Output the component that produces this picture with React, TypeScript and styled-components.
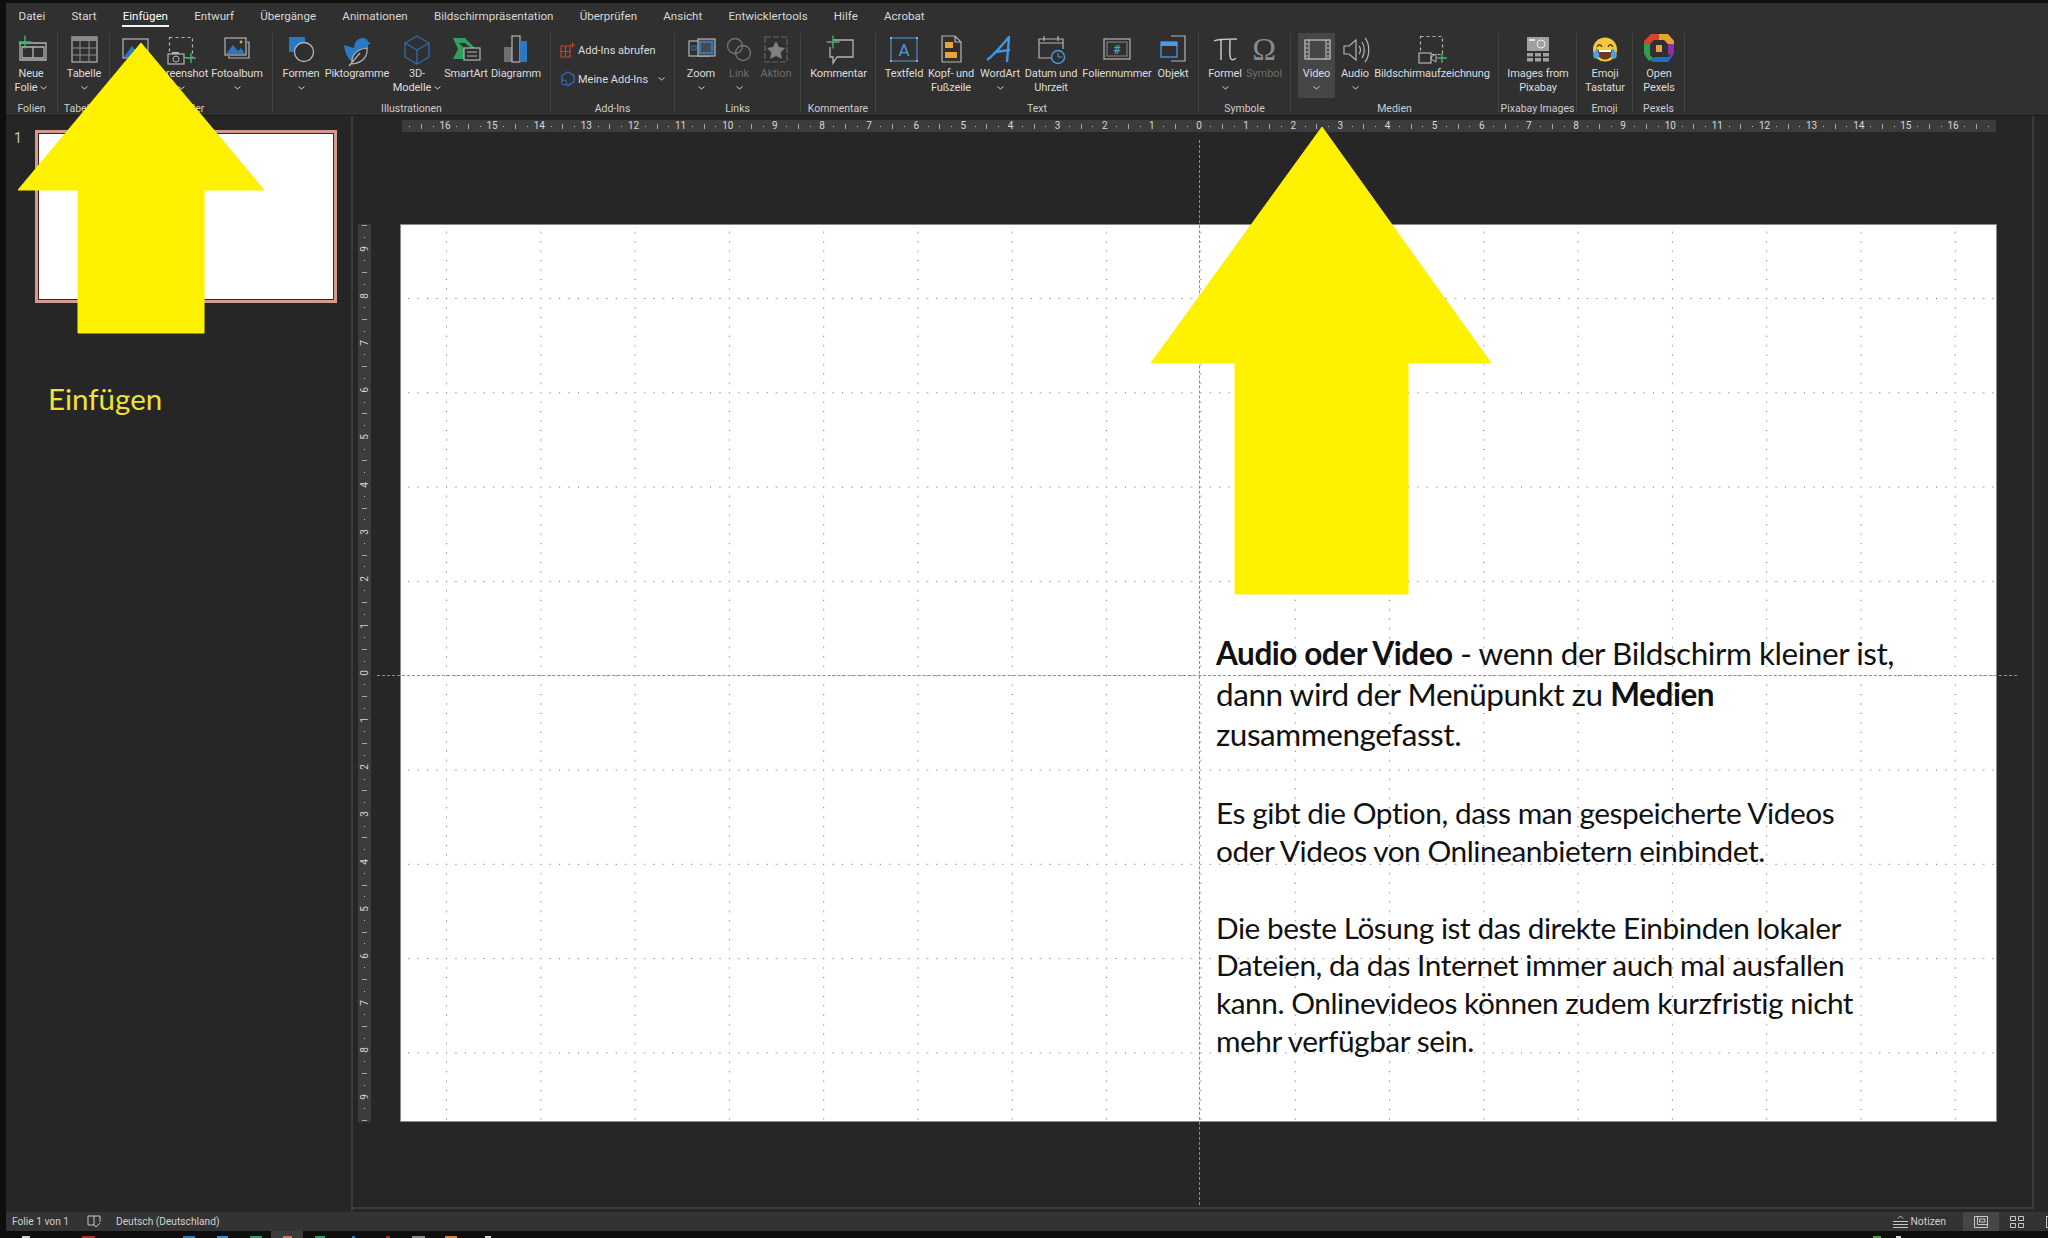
import React from 'react';
import styled, { createGlobalStyle } from 'styled-components';

const GRID = 94.3;
const UNIT = GRID / 2;
const BLUE = '#2b79c2';
const LINE = '#b4b4b4';
const GREEN = '#3fb66b';
const ORANGE = '#e8a33d';

const GlobalStyle = createGlobalStyle`
  html, body { margin: 0; padding: 0; background: #101010; }
  * { box-sizing: border-box; }
`;

/* Ribbon icons, all on a 34x34 canvas centred on the button */
const Plus = ({ x, y, s = 6 }: { x: number; y: number; s?: number }) => (
  <path d={`M${x - s} ${y}H${x + s}M${x} ${y - s}V${y + s}`} stroke={GREEN} strokeWidth="1.4" fill="none" />
);

const icons: Record<string, React.ReactNode> = {
  slide: (
    <>
      <path d="M6 10H32V27H6ZM8 14H30V25H8ZM19 14V25" fill="none" stroke={LINE} strokeWidth="1.3" />
      <Plus x={11} y={9} s={6.5} />
    </>
  ),
  table: (
    <>
      <rect x="5" y="4" width="25" height="25" fill="none" stroke={LINE} strokeWidth="1.2" />
      <rect x="5" y="4" width="25" height="4" fill="#8c8c8c" />
      <path d="M13 8V29M22 8V29M5 15H30M5 22H30" stroke="#8f8f8f" strokeWidth="1" />
    </>
  ),
  picture: (
    <>
      <rect x="5" y="6" width="25" height="19" fill="none" stroke={LINE} strokeWidth="1.2" />
      <path d="M6 24L14 13L20 20L24 16L29 24Z" fill={BLUE} />
    </>
  ),
  screenshot: (
    <>
      <rect x="5.5" y="4.5" width="23" height="20" fill="none" stroke={LINE} strokeWidth="1.2" strokeDasharray="3 3" />
      <rect x="4" y="21" width="16" height="10" fill="#2f2f2f" stroke={LINE} strokeWidth="1.2" />
      <rect x="8" y="19" width="7" height="2" fill={LINE} />
      <circle cx="12" cy="26" r="3" fill="none" stroke={LINE} />
      <Plus x={27} y={25} s={5} />
    </>
  ),
  album: (
    <>
      <path d="M27 9H29V25H9V23" fill="none" stroke={LINE} strokeWidth="1.2" />
      <rect x="5" y="5" width="21" height="17" fill="none" stroke={LINE} strokeWidth="1.2" />
      <path d="M6 21L13 12L18 18L21 15L25 21Z" fill={BLUE} />
      <circle cx="21" cy="9" r="1.4" fill={ORANGE} />
    </>
  ),
  shapes: (
    <>
      <rect x="5" y="4" width="16" height="15" fill={BLUE} />
      <circle cx="20" cy="19" r="9.5" fill="#2f2f2f" stroke={LINE} strokeWidth="1.3" />
    </>
  ),
  icons: (
    <>
      <path d="M4 12L14 15C14 9 18 5 23 5C26 5 28 7 28 9L31 10L28 12C28 18 25 22 21 25L17 31C11 30 5 23 4 12Z" fill={BLUE} />
      <path d="M12 31C11 23 16 16 27 15C28 24 22 30 12 31ZM9 33L20 20" fill="#2f2f2f" stroke={LINE} strokeWidth="1.2" />
    </>
  ),
  cube: (
    <path d="M17 3L29 10V24L17 31L5 24V10ZM5 10L17 17L29 10M17 17V31" fill="none" stroke="#2a6db0" strokeWidth="1.3" />
  ),
  smartart: (
    <>
      <path d="M4 5H16L26 15H22L16 10H10L16 16V26H4L9 16Z" fill="#2f9e5f" />
      <rect x="15" y="15" width="16" height="12" fill="#2f2f2f" stroke={LINE} strokeWidth="1.2" />
      <path d="M18 19H28M18 23H28" stroke={LINE} />
    </>
  ),
  chart: (
    <>
      <rect x="5" y="14" width="8" height="15" fill="#6f6f6f" />
      <rect x="13" y="3" width="8" height="26" fill="none" stroke={LINE} strokeWidth="1.2" />
      <rect x="21" y="8" width="7" height="21" fill={BLUE} />
    </>
  ),
  zoom: (
    <>
      <rect x="5" y="8" width="20" height="15" fill="none" stroke={LINE} strokeWidth="1.2" />
      <rect x="14" y="6" width="17" height="17" fill="#4a4a4a" stroke={LINE} strokeWidth="1.2" />
      <rect x="16" y="9" width="12" height="11" fill="none" stroke={BLUE} strokeWidth="2" />
      <rect x="8" y="13" width="4" height="4" fill="none" stroke={BLUE} />
    </>
  ),
  link: (
    <>
      <circle cx="13" cy="13" r="7.5" fill="none" stroke="#747474" strokeWidth="1.3" />
      <circle cx="21" cy="20" r="7.5" fill="none" stroke="#747474" strokeWidth="1.3" />
    </>
  ),
  action: (
    <>
      <rect x="6" y="4" width="22" height="25" fill="none" stroke="#666" strokeWidth="1.2" strokeDasharray="6 2" />
      <path d="M17 8L20 14L26 15L21.5 19.5L23 26L17 23L11 26L12.5 19.5L8 15L14 14Z" fill="#808080" />
    </>
  ),
  comment: (
    <>
      <path d="M11 7H31V24H15L11 30V24H8V14" fill="none" stroke={LINE} strokeWidth="1.3" />
      <Plus x={11} y={9} s={6.5} />
    </>
  ),
  textbox: (
    <>
      <rect x="4" y="5" width="26" height="23" fill="none" stroke="#4d8cc4" strokeWidth="1.2" />
      <path d="M3 4h2v2h-2zM29 4h2v2h-2zM3 27h2v2h-2zM29 27h2v2h-2z" fill="#7db4e4" />
      <text x="17" y="23" textAnchor="middle" fontFamily="Roboto, sans-serif" fontSize="17" fill="#4d9ae0">A</text>
    </>
  ),
  header: (
    <>
      <path d="M8 3H21L27 9V29H8ZM21 3V9H27" fill="none" stroke={LINE} strokeWidth="1.2" />
      <rect x="11" y="9" width="8" height="6" fill={ORANGE} />
      <rect x="11" y="19" width="12" height="6" fill={ORANGE} />
    </>
  ),
  wordart: (
    <path d="M4 27C11 22 19 12 26 4L24 29M12 19L27 17" fill="none" stroke="#3f97e8" strokeWidth="2.4" strokeLinejoin="round" />
  ),
  calendar: (
    <>
      <path d="M20 25H5V6H29V16M5 10H29M10 3V8M24 3V8" fill="none" stroke={LINE} strokeWidth="1.2" />
      <circle cx="24" cy="24" r="6.5" fill="#2f2f2f" stroke="#4d9ae0" strokeWidth="1.4" />
      <path d="M24 20V24H28" fill="none" stroke="#4d9ae0" />
    </>
  ),
  number: (
    <>
      <rect x="4" y="6" width="26" height="20" fill="none" stroke={LINE} strokeWidth="1.2" />
      <rect x="7" y="9" width="20" height="14" fill="none" stroke="#8a8a8a" />
      <text x="17" y="20.5" textAnchor="middle" fontFamily="Roboto, sans-serif" fontWeight="700" fontSize="12" fill="#4d9ae0">#</text>
    </>
  ),
  object: (
    <>
      <path d="M15 3H29V28H15" fill="none" stroke={LINE} strokeWidth="1.2" />
      <rect x="5" y="9" width="16" height="15" fill="#2f2f2f" stroke="#4d9ae0" strokeWidth="1.3" />
      <rect x="5" y="9" width="16" height="4" fill="#4d9ae0" />
    </>
  ),
  pi: (
    <path d="M6 8C9 6 26 6 29 6M13 7V27M22 7C22 16 21 24 23 26C24 27 26 27 28 25" fill="none" stroke="#c4c4c4" strokeWidth="1.5" />
  ),
  omega: (
    <text x="17" y="27" textAnchor="middle" fontFamily="Liberation Serif, serif" fontSize="32" fill="#8a8a8a">Ω</text>
  ),
  video: (
    <>
      <rect x="5" y="7" width="25" height="19" fill="none" stroke="#c8c8c8" strokeWidth="1.2" />
      <path d="M9 7V26M26 7V26" stroke="#c8c8c8" />
      <path d="M7 10V24M28 10V24" stroke="#c8c8c8" strokeDasharray="2 2" />
    </>
  ),
  audio: (
    <>
      <path d="M6 13H11L18 7V27L11 21H6Z" fill="none" stroke={LINE} strokeWidth="1.2" />
      <path d="M21 13C23 15 23 19 21 21M24 9C27 13 27 21 24 25M27 5C32 11 32 23 27 29" fill="none" stroke={LINE} strokeWidth="1.2" />
    </>
  ),
  record: (
    <>
      <rect x="5.5" y="3.5" width="22" height="18" fill="none" stroke={LINE} strokeWidth="1.2" strokeDasharray="3 3" />
      <rect x="4" y="20" width="12" height="10" fill="#2f2f2f" stroke={LINE} strokeWidth="1.2" />
      <path d="M16 24L21 21V29L16 26Z" fill="none" stroke={LINE} />
      <Plus x={27} y={25} s={5} />
    </>
  ),
  pixabay: (
    <>
      <rect x="6" y="4" width="22" height="14" fill="#a0a0a0" />
      <rect x="8" y="6" width="6" height="2" fill="#e4e4e4" />
      <circle cx="20" cy="11" r="4" fill="#a0a0a0" stroke="#ececec" />
      {[6, 14, 22].map((x) => (
        <React.Fragment key={x}>
          <rect x={x} y="20" width="6" height="3.5" fill="#a0a0a0" />
          <rect x={x} y="25" width="6" height="3.5" fill="#a0a0a0" />
        </React.Fragment>
      ))}
    </>
  ),
  emoji: (
    <>
      <ellipse cx="17" cy="16.5" rx="12" ry="12" fill="#f4c93f" />
      <path d="M9 14C10 11 13 11 14 14M20 14C21 11 24 11 25 14" fill="none" stroke="#5a3a18" strokeWidth="1.3" />
      <path d="M9 17H25C25 25 20 26.5 17 26.5C14 26.5 9 25 9 17Z" fill="#6a3a1c" />
      <path d="M11 17H23V19H11Z" fill="#fff" />
      <path d="M9 15C6 19 4 22 6 25C8 27 12 25 11 21ZM25 15C28 19 30 22 28 25C26 27 22 25 23 21Z" fill="#4ba3e3" />
    </>
  ),
  pexels: (
    <>
      <path d="M9 1H17V7H12L8 11H2V8Z" fill="#d9432b" />
      <path d="M17 1H26L32 8V11H26L22 7H17Z" fill="#e8a12d" />
      <path d="M32 11V20L30 24L26 21V11Z" fill="#8c2fa8" />
      <path d="M2 11H8V22L12 26L7 28L2 21Z" fill="#2f9e4f" />
      <path d="M12 24H26L31 22L26 29H9Z" fill="#1f6fc4" />
      <rect x="14" y="12" width="6" height="7" fill={ORANGE} />
    </>
  )
};

type Btn = { icon: string; lines: string[]; w: number; chevron?: boolean; dim?: boolean; active?: boolean };
type Group = { title: string; w: number; pad?: number; buttons: Btn[] };

const leftGroups: Group[] = [
  { title: 'Folien', w: 52, buttons: [{ icon: 'slide', lines: ['Neue', 'Folie'], w: 50, chevron: true }] },
  { title: 'Tabellen', w: 52, buttons: [{ icon: 'table', lines: ['Tabelle'], w: 52, chevron: true }] },
  {
    title: 'Bilder',
    w: 163,
    buttons: [
      { icon: 'picture', lines: ['Bilder'], w: 50 },
      { icon: 'screenshot', lines: ['Screenshot'], w: 42, chevron: true },
      { icon: 'album', lines: ['Fotoalbum'], w: 70, chevron: true }
    ]
  },
  {
    title: 'Illustrationen',
    w: 278,
    buttons: [
      { icon: 'shapes', lines: ['Formen'], w: 56, chevron: true },
      { icon: 'icons', lines: ['Piktogramme'], w: 56 },
      { icon: 'cube', lines: ['3D-', 'Modelle'], w: 64, chevron: true },
      { icon: 'smartart', lines: ['SmartArt'], w: 34 },
      { icon: 'chart', lines: ['Diagramm'], w: 66 }
    ]
  }
];

const rightGroups: Group[] = [
  {
    title: 'Links',
    w: 126,
    buttons: [
      { icon: 'zoom', lines: ['Zoom'], w: 52, chevron: true },
      { icon: 'link', lines: ['Link'], w: 24, chevron: true, dim: true },
      { icon: 'action', lines: ['Aktion'], w: 50, dim: true }
    ]
  },
  { title: 'Kommentare', w: 75, buttons: [{ icon: 'comment', lines: ['Kommentar'], w: 75 }] },
  {
    title: 'Text',
    w: 323,
    buttons: [
      { icon: 'textbox', lines: ['Textfeld'], w: 56 },
      { icon: 'header', lines: ['Kopf- und', 'Fußzeile'], w: 38 },
      { icon: 'wordart', lines: ['WordArt'], w: 60, chevron: true },
      { icon: 'calendar', lines: ['Datum und', 'Uhrzeit'], w: 42 },
      { icon: 'number', lines: ['Foliennummer'], w: 90 },
      { icon: 'object', lines: ['Objekt'], w: 22 }
    ]
  },
  {
    title: 'Symbole',
    w: 92,
    buttons: [
      { icon: 'pi', lines: ['Formel'], w: 52, chevron: true },
      { icon: 'omega', lines: ['Symbol'], w: 26, dim: true }
    ]
  },
  {
    title: 'Medien',
    w: 208,
    pad: 7,
    buttons: [
      { icon: 'video', lines: ['Video'], w: 37, chevron: true, active: true },
      { icon: 'audio', lines: ['Audio'], w: 40, chevron: true },
      { icon: 'record', lines: ['Bildschirmaufzeichnung'], w: 114 }
    ]
  },
  { title: 'Pixabay Images', w: 78, buttons: [{ icon: 'pixabay', lines: ['Images from', 'Pixabay'], w: 78 }] },
  { title: 'Emoji', w: 56, buttons: [{ icon: 'emoji', lines: ['Emoji', 'Tastatur'], w: 56 }] },
  { title: 'Pexels', w: 52, buttons: [{ icon: 'pexels', lines: ['Open', 'Pexels'], w: 52 }] }
];

const tabs = [
  'Datei', 'Start', 'Einfügen', 'Entwurf', 'Übergänge', 'Animationen',
  'Bildschirmpräsentation', 'Überprüfen', 'Ansicht', 'Entwicklertools', 'Hilfe', 'Acrobat'
];

const taskbarBits = [
  { gap: 16, w: 8, color: '#cfcfcf' }, { gap: 52, w: 13, color: '#a83228' }, { gap: 88, w: 12, color: '#2b79c2' },
  { gap: 22, w: 11, color: '#3a8fd0' }, { gap: 22, w: 12, color: '#2f9e5f' }, { gap: 21, w: 9, color: '#c9734f' },
  { gap: 23, w: 10, color: '#2f9e5f' }, { gap: 27, w: 3, color: '#2b79c2' }, { gap: 31, w: 4, color: '#a83228' },
  { gap: 22, w: 13, color: '#8a8a8a' }, { gap: 20, w: 12, color: '#c9873f' }, { gap: 28, w: 6, color: '#d8d8d8' },
  { gap: 1382, w: 8, color: '#4f9a3c' }, { gap: 15, w: 5, color: '#d8d8d8' }
];

const Chevron = () => (
  <ChevronSvg viewBox="0 0 7 4">
    <path d="M0.5 0.5L3.5 3L6.5 0.5" fill="none" stroke="#cfcfcf" strokeWidth="1" />
  </ChevronSvg>
);

const RibbonButton = ({ btn }: { btn: Btn }) => (
  <ToolButton $w={btn.w} $dim={btn.dim} $active={btn.active}>
    <IconSvg viewBox="0 0 34 34">{icons[btn.icon]}</IconSvg>
    {btn.lines.map((line, i) => (
      <LabelLine key={line}>
        {line}
        {btn.chevron && btn.lines.length > 1 && i === btn.lines.length - 1 && <Chevron />}
      </LabelLine>
    ))}
    {btn.chevron && btn.lines.length === 1 && (
      <LabelLine>
        <Chevron />
      </LabelLine>
    )}
  </ToolButton>
);

const RibbonGroup = ({ group }: { group: Group }) => (
  <GroupBox $w={group.w}>
    <ButtonRow $pad={group.pad ?? 0}>
      {group.buttons.map((btn) => (
        <RibbonButton key={btn.lines[0]} btn={btn} />
      ))}
    </ButtonRow>
    <GroupTitle>{group.title}</GroupTitle>
  </GroupBox>
);

/* One ruler: a row of quarter-unit slots, numbered on the whole units */
const Ruler = ({ half, vertical }: { half: number; vertical?: boolean }) => {
  const slots = [];
  for (let i = -half * 4; i <= half * 4; i++) {
    let mark: React.ReactNode = <TickDot />;
    if (i % 4 === 0) mark = <RulerNumber $vertical={vertical}>{Math.abs(i / 4)}</RulerNumber>;
    else if (i % 2 === 0) mark = <TickDash $vertical={vertical} />;
    slots.push(<RulerSlot key={i} $vertical={vertical}>{mark}</RulerSlot>);
  }
  return vertical ? <VerticalRuler>{slots}</VerticalRuler> : <TopRuler>{slots}</TopRuler>;
};

/* Dots of the 2 cm drawing grid */
const GridDots = () => {
  const steps = Array.from({ length: 10 }, (_, i) => (i * GRID) / 10);
  return (
    <GridSvg>
      <defs>
        <pattern id="dots" x="45" y="73" width={GRID} height={GRID} patternUnits="userSpaceOnUse">
          {steps.map((s) => (
            <React.Fragment key={s}>
              <rect x={s} y="0" width="1" height="1" fill="#5a5a5a" />
              <rect x="0" y={s} width="1" height="1" fill="#5a5a5a" />
            </React.Fragment>
          ))}
        </pattern>
      </defs>
      <rect width="100%" height="100%" fill="url(#dots)" />
    </GridSvg>
  );
};

export default function App() {
  return (
    <Page>
      <GlobalStyle />
      <Body>
        <TabBar>
          {tabs.map((tab) => (
            <Tab key={tab} $active={tab === 'Einfügen'}>{tab}</Tab>
          ))}
        </TabBar>
        <Ribbon>
          {leftGroups.map((group) => (
            <RibbonGroup key={group.title} group={group} />
          ))}
          <GroupBox $w={124}>
            <AddInStack>
              <AddInRow>
                <svg width="16" height="16" viewBox="0 0 16 16">
                  <path d="M1 4H10V15H1ZM1 9.5H10M5.5 4V15" fill="none" stroke="#c8452f" strokeWidth="1.2" />
                  <path d="M10 3H15M12.5 0.5V5.5" stroke="#c8452f" strokeWidth="1" />
                </svg>
                Add-Ins abrufen
              </AddInRow>
              <AddInRow>
                <svg width="16" height="16" viewBox="0 0 16 16">
                  <path d="M8 1L14 4.5V11L8 14.5L2 11V4.5Z" fill="none" stroke="#2b79c2" strokeWidth="1.2" />
                  <circle cx="4" cy="11.5" r="2.5" fill="#2f2f2f" stroke="#2b79c2" />
                </svg>
                Meine Add-Ins
                <ChevronGap><Chevron /></ChevronGap>
              </AddInRow>
            </AddInStack>
            <GroupTitle>Add-Ins</GroupTitle>
          </GroupBox>
          {rightGroups.map((group) => (
            <RibbonGroup key={group.title} group={group} />
          ))}
        </Ribbon>
        <Workspace>
          <ThumbPane>
            <ThumbRow>
              <ThumbNumber>1</ThumbNumber>
              <Thumb />
            </ThumbRow>
            <PaneNote>Einfügen</PaneNote>
          </ThumbPane>
          <Editor>
            <Ruler half={16.75} />
            <EditorRow>
              <Ruler half={9.5} vertical />
              <Slide>
                <GridDots />
                <TextBox>
                  <Para $lh={40.5} $size={31.5}>
                    <b>Audio oder Video</b> - wenn der Bildschirm kleiner ist,
                    <br />
                    dann wird der Menüpunkt zu <b>Medien</b>
                    <br />
                    zusammengefasst.
                  </Para>
                  <Para $lh={38} $size={29.8}>
                    Es gibt die Option, dass man gespeicherte Videos
                    <br />
                    oder Videos von Onlineanbietern einbindet.
                  </Para>
                  <Para $lh={37.7} $size={29.8}>
                    Die beste Lösung ist das direkte Einbinden lokaler
                    <br />
                    Dateien, da das Internet immer auch mal ausfallen
                    <br />
                    kann. Onlinevideos können zudem kurzfristig nicht
                    <br />
                    mehr verfügbar sein.
                  </Para>
                </TextBox>
              </Slide>
            </EditorRow>
            <GuideV />
            <GuideH />
          </Editor>
        </Workspace>
        <StatusBar>
          <StatusText>Folie 1 von 1</StatusText>
          <BookIcon viewBox="0 0 14 13">
            <path d="M1 1H7V10H1ZM7 1H13V7M7 10L9 12L13 8" fill="none" stroke="#c8c8c8" strokeWidth="1" />
          </BookIcon>
          <StatusText>Deutsch (Deutschland)</StatusText>
          <StatusSpacer />
          <svg width="15" height="13" viewBox="0 0 15 13">
            <path d="M0 6.5H15M0 9.5H15M0 12.5H15M5 3.5L7.5 1L10 3.5" fill="none" stroke="#c8c8c8" strokeWidth="1" />
          </svg>
          <NotesText>Notizen</NotesText>
          <ViewButton $active>
            <svg width="14" height="12" viewBox="0 0 14 12">
              <path d="M0.5 0.5H13.5V11.5H0.5ZM3.5 0.5V8.5H13.5M5.5 3H11V6H5.5Z" fill="none" stroke="#c8c8c8" />
            </svg>
          </ViewButton>
          <ViewButton>
            <svg width="14" height="12" viewBox="0 0 14 12">
              <path d="M0.5 0.5H5.5V4.5H0.5ZM8.5 0.5H13.5V4.5H8.5ZM0.5 7.5H5.5V11.5H0.5ZM8.5 7.5H13.5V11.5H8.5Z" fill="none" stroke="#c8c8c8" />
            </svg>
          </ViewButton>
          <ClippedViewIcon />
        </StatusBar>
        <Taskbar>
          <TaskbarActive />
          {taskbarBits.map((bit, i) => (
            <TaskbarBit key={i} $gap={bit.gap} $w={bit.w} $color={bit.color} />
          ))}
        </Taskbar>
      </Body>
      <ArrowSvg viewBox="0 0 2048 1238">
        <path d="M141 43L264 190H204V333H78V190H18Z" />
        <path d="M1322 127L1491 363H1408V594H1235V363H1151Z" />
      </ArrowSvg>
    </Page>
  );
}

const Page = styled.div`
  position: relative;
  width: 2048px;
  height: 1238px;
  overflow: hidden;
  background: #0e0e0e;
  padding-top: 3px;
  padding-left: 6px;
  font-family: Roboto, 'Noto Sans', sans-serif;
`;

const Body = styled.div`
  display: flex;
  flex-direction: column;
  height: 1235px;
`;

const TabBar = styled.div`
  display: flex;
  flex: none;
  height: 30px;
  background: #303030;
`;

const Tab = styled.div<{ $active?: boolean }>`
  position: relative;
  padding: 0 13.6px 0 12.6px;
  font-size: 11.6px;
  line-height: 27px;
  color: ${(p) => (p.$active ? '#fff' : '#d8d8d8')};
  ${(p) => p.$active && `
    &::after {
      content: '';
      position: absolute;
      left: 12px;
      right: 13px;
      top: 22px;
      height: 2px;
      background: #f2f2f2;
    }
  `}
`;

const Ribbon = styled.div`
  display: flex;
  flex: none;
  height: 83px;
  background: #303030;
  border-bottom: 1px solid #1a1a1a;
`;

const GroupBox = styled.div<{ $w: number }>`
  display: flex;
  flex-direction: column;
  flex: none;
  width: ${(p) => p.$w}px;
  height: 79px;
  border-right: 1px solid #444;
`;

const ButtonRow = styled.div<{ $pad: number }>`
  display: flex;
  height: 66px;
  padding-left: ${(p) => p.$pad}px;
`;

const ToolButton = styled.div<{ $w: number; $dim?: boolean; $active?: boolean }>`
  display: flex;
  flex-direction: column;
  align-items: center;
  flex: none;
  width: ${(p) => p.$w}px;
  height: 65px;
  font-size: 11px;
  letter-spacing: -0.1px;
  color: ${(p) => (p.$dim ? '#6c6c6c' : '#dcdcdc')};
  background: ${(p) => (p.$active ? '#464646' : 'transparent')};
`;

const IconSvg = styled.svg`
  flex: none;
  width: 34px;
  height: 34px;
  overflow: visible;
`;

const LabelLine = styled.div`
  flex: none;
  display: flex;
  align-items: center;
  justify-content: center;
  gap: 3px;
  height: 14px;
  line-height: 14px;
  white-space: nowrap;
`;

const ChevronSvg = styled.svg`
  width: 7px;
  height: 4px;
  flex: none;
`;

const GroupTitle = styled.div`
  height: 13px;
  line-height: 20px;
  font-size: 10.5px;
  text-align: center;
  color: #cdcdcd;
  white-space: nowrap;
`;

const AddInStack = styled.div`
  display: flex;
  flex-direction: column;
  height: 66px;
  padding: 9px 0 0 9px;
  gap: 13px;
`;

const AddInRow = styled.div`
  display: flex;
  align-items: center;
  gap: 2px;
  height: 16px;
  font-size: 11px;
  color: #dcdcdc;
  white-space: nowrap;
`;

const ChevronGap = styled.span`
  display: flex;
  margin-left: 8px;
`;

const Workspace = styled.div`
  display: flex;
  flex: none;
  height: 1096px;
  background: #262626;
`;

const ThumbPane = styled.div`
  flex: none;
  width: 347px;
  padding-top: 14px;
  border-right: 2px solid #3c3c3c;
`;

const ThumbRow = styled.div`
  display: flex;
  padding-left: 8px;
`;

const ThumbNumber = styled.div`
  width: 21px;
  font-size: 14px;
  line-height: 16px;
  color: #c4c4c4;
`;

const Thumb = styled.div`
  width: 302px;
  height: 173px;
  background: #fff;
  border: 3px solid #d29b8e;
  box-shadow: inset 0 0 0 1px #4a2019;
`;

const PaneNote = styled.div`
  margin: 78px 0 0 42px;
  font-family: Lato, sans-serif;
  font-size: 29.5px;
  line-height: 36px;
  color: #efe333;
`;

const Editor = styled.div`
  position: relative;
  flex: none;
  width: 1681px;
  margin-bottom: 3px;
  padding: 4px 0 0 5px;
  border-right: 2px solid #3c3c3c;
  border-bottom: 2px solid #3c3c3c;
`;

const TopRuler = styled.div`
  display: flex;
  justify-content: center;
  width: 1594px;
  height: 12px;
  margin-left: 44px;
  overflow: hidden;
  background: #3c3c3c;
`;

const VerticalRuler = styled.div`
  display: flex;
  flex-direction: column;
  justify-content: center;
  flex: none;
  width: 13px;
  height: 898px;
  overflow: hidden;
  background: #3c3c3c;
`;

const RulerSlot = styled.div<{ $vertical?: boolean }>`
  display: flex;
  align-items: center;
  justify-content: center;
  flex: none;
  width: ${(p) => (p.$vertical ? '13px' : `${UNIT / 4}px`)};
  height: ${(p) => (p.$vertical ? `${UNIT / 4}px` : '12px')};
`;

const RulerNumber = styled.span<{ $vertical?: boolean }>`
  font-size: 10px;
  line-height: 10px;
  color: #d6d6d6;
  transform: ${(p) => (p.$vertical ? 'rotate(-90deg)' : 'none')};
`;

const TickDot = styled.i`
  width: 1px;
  height: 1px;
  background: #c0c0c0;
`;

const TickDash = styled.i<{ $vertical?: boolean }>`
  width: ${(p) => (p.$vertical ? '5px' : '1px')};
  height: ${(p) => (p.$vertical ? '1px' : '5px')};
  background: #a8a8a8;
`;

const EditorRow = styled.div`
  display: flex;
  gap: 29px;
  margin-top: 92px;
`;

const Slide = styled.div`
  position: relative;
  flex: none;
  width: 1597px;
  height: 898px;
  background: #fff;
  border: 1px solid #8a8a8a;
`;

const GridSvg = styled.svg`
  position: absolute;
  inset: 0;
  width: 100%;
  height: 100%;
`;

const TextBox = styled.div`
  position: absolute;
  left: 815px;
  top: 408px;
  display: flex;
  flex-direction: column;
  gap: 39px;
  font-family: Lato, sans-serif;
  letter-spacing: -0.45px;
  color: #111;
  white-space: nowrap;
`;

const Para = styled.div<{ $lh: number; $size: number }>`
  font-size: ${(p) => p.$size}px;
  line-height: ${(p) => p.$lh}px;
`;

const GuideV = styled.div`
  position: absolute;
  left: 846px;
  top: 24px;
  height: 1065px;
  border-left: 1px dashed #8c8c8c;
`;

const GuideH = styled.div`
  position: absolute;
  left: 24px;
  top: 559px;
  width: 1640px;
  border-top: 1px dashed #8c8c8c;
`;

const StatusBar = styled.div`
  display: flex;
  align-items: center;
  flex: none;
  height: 19px;
  padding-left: 6px;
  background: #333;
`;

const StatusText = styled.span`
  font-size: 10.2px;
  color: #d0d0d0;
  white-space: nowrap;
`;

const BookIcon = styled.svg`
  width: 14px;
  height: 13px;
  margin: 0 15px 0 18px;
`;

const StatusSpacer = styled.div`
  flex: 1;
`;

const NotesText = styled.span`
  margin: 0 17px 0 2px;
  font-size: 10.4px;
  color: #d0d0d0;
`;

const ViewButton = styled.div<{ $active?: boolean }>`
  display: flex;
  align-items: center;
  justify-content: center;
  width: 36px;
  height: 19px;
  margin-right: ${(p) => (p.$active ? '0' : '11px')};
  background: ${(p) => (p.$active ? '#464646' : 'transparent')};
`;

const ClippedViewIcon = styled.i`
  width: 2px;
  height: 12px;
  border: 1px solid #c8c8c8;
  border-right: 0;
`;

const Taskbar = styled.div`
  position: relative;
  display: flex;
  align-items: flex-end;
  flex: 1;
  background: #0e0e0e;
`;

const TaskbarBit = styled.i<{ $gap: number; $w: number; $color: string }>`
  position: relative;
  flex: none;
  margin-left: ${(p) => p.$gap}px;
  width: ${(p) => p.$w}px;
  height: 2px;
  background: ${(p) => p.$color};
`;

const TaskbarActive = styled.div`
  position: absolute;
  left: 265px;
  top: 0;
  width: 32px;
  height: 100%;
  background: #3c3c3c;
`;

const ArrowSvg = styled.svg`
  position: absolute;
  inset: 0;
  width: 2048px;
  height: 1238px;
  fill: #fff200;
  stroke: #fff200;
  stroke-width: 1;
  stroke-linejoin: round;
  pointer-events: none;
`;
